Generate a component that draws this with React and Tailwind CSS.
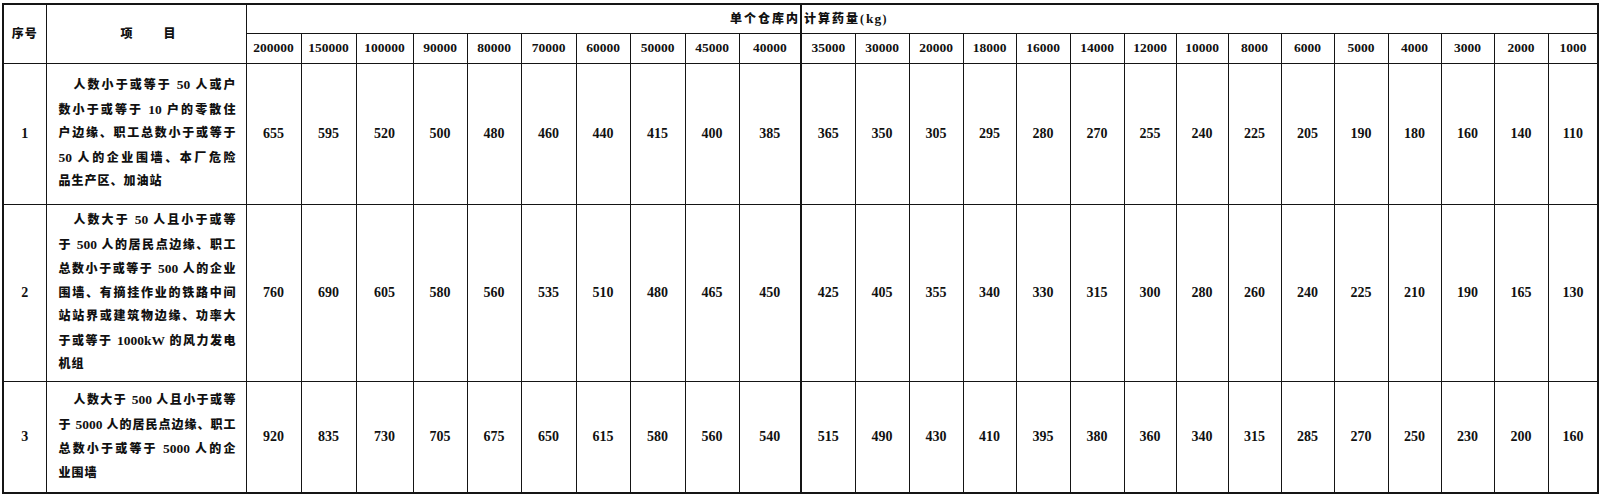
import React from "react";

const widths = [43, 200, 55, 55, 57, 54, 54, 55, 54, 55, 54, 62, 54, 54, 54, 53, 54, 54, 52, 52, 53, 53, 54, 53, 53, 54, 50];

const heads = ["200000", "150000", "100000", "90000", "80000", "70000", "60000", "50000", "45000", "40000", "35000", "30000", "20000", "18000", "16000", "14000", "12000", "10000", "8000", "6000", "5000", "4000", "3000", "2000", "1000"];

const rows = [
  {
    no: "1",
    h: "h-[141px]",
    lines: ["人数小于或等于 50 人或户", "数小于或等于 10 户的零散住", "户边缘、职工总数小于或等于", "50 人的企业围墙、本厂危险", "品生产区、加油站"],
    vals: [655, 595, 520, 500, 480, 460, 440, 415, 400, 385, 365, 350, 305, 295, 280, 270, 255, 240, 225, 205, 190, 180, 160, 140, 110],
  },
  {
    no: "2",
    h: "h-[177px]",
    lines: ["人数大于 50 人且小于或等", "于 500 人的居民点边缘、职工", "总数小于或等于 500 人的企业", "围墙、有摘挂作业的铁路中间", "站站界或建筑物边缘、功率大", "于或等于 1000kW 的风力发电", "机组"],
    vals: [760, 690, 605, 580, 560, 535, 510, 480, 465, 450, 425, 405, 355, 340, 330, 315, 300, 280, 260, 240, 225, 210, 190, 165, 130],
  },
  {
    no: "3",
    h: "h-[112px]",
    lines: ["人数大于 500 人且小于或等", "于 5000 人的居民点边缘、职工", "总数小于或等于 5000 人的企", "业围墙"],
    vals: [920, 835, 730, 705, 675, 650, 615, 580, 560, 540, 515, 490, 430, 410, 395, 380, 360, 340, 315, 285, 270, 250, 230, 200, 160],
  },
];

const cell = "border border-[#151515] p-0 text-center align-middle";

// digits inside the Chinese text are set a bit larger, like the print
const Line = ({ text }) =>
  text.split(/([0-9]+k?W?)/).map((part, i) =>
    /[0-9]/.test(part) ? (
      <span key={i} className="text-[13.5px]">{part}</span>
    ) : (
      <React.Fragment key={i}>{part}</React.Fragment>
    )
  );

export default function App() {
  return (
    <div className="bg-white w-[1600px] h-[495px] pt-[3px] pl-[2px] font-['Liberation_Serif','Noto_Sans_CJK_SC',serif] font-bold text-[14px] text-[#111]">
      <table className="table-fixed border-collapse border-2 border-[#151515] w-[1595px]">
        <colgroup>
          {widths.map((w, i) => (
            <col key={i} style={{ width: w }} />
          ))}
        </colgroup>
        <thead>
          <tr className="h-[29px]">
            <th rowSpan={2} className={`${cell} text-[12px] font-black tracking-[1px]`}>序号</th>
            <th rowSpan={2} className={`${cell} text-[12px] font-black`}>
              <div className="flex justify-center gap-[31px] pl-[4px]">
                <span>项</span>
                <span>目</span>
              </div>
            </th>
            <th colSpan={10} className={`${cell} border-r-2 text-right text-[12px] font-black tracking-[2px]`}>单个仓库内</th>
            <th colSpan={15} className={`${cell} text-left pl-[2px] text-[12px] font-black tracking-[2px]`}>
              计算药量(<span className="text-[13.5px] tracking-[1px]">kg</span>)
            </th>
          </tr>
          <tr className="h-[30px]">
            {heads.map((h, i) => (
              <th key={h} className={`${cell} text-[13.5px] ${i === 9 ? "border-r-2" : ""}`}>{h}</th>
            ))}
          </tr>
        </thead>
        <tbody>
          {rows.map((r) => (
            <tr key={r.no} className={r.h}>
              <td className={cell}>{r.no}</td>
              <td className={`${cell} text-left pl-[12px] pr-[10px] text-[12px] font-black leading-[23.5px]`}>
                {r.lines.map((l, i) => (
                  <div
                    key={i}
                    className={`${i === 0 ? "pl-[15px]" : ""} ${i < r.lines.length - 1 ? "text-justify [text-align-last:justify]" : "tracking-[1px]"}`}
                  >
                    <Line text={l} />
                  </div>
                ))}
              </td>
              {r.vals.map((v, i) => (
                <td key={i} className={`${cell} ${i === 9 ? "border-r-2" : ""}`}>{v}</td>
              ))}
            </tr>
          ))}
        </tbody>
      </table>
    </div>
  );
}
